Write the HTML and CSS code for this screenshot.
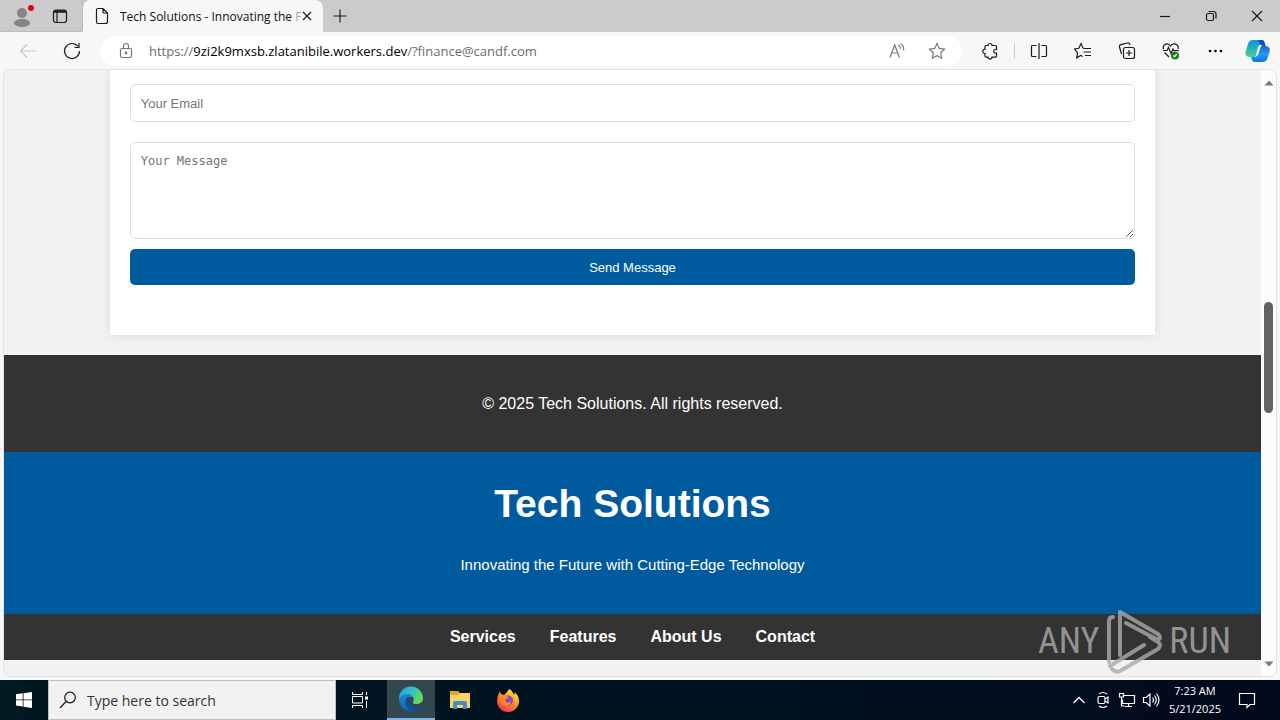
FILE: index.html
```html
<!DOCTYPE html>
<html lang="en">
<head>
<meta charset="utf-8">
<title>Tech Solutions - Innovating the Future</title>
<link rel="stylesheet" href="styles.css">
</head>
<body>
<header class="tabbar">
  <div class="tab-tools">
    <button class="icon-btn profile" aria-label="Profile">
      <svg width="26" height="28" viewBox="0 0 26 28"><circle cx="12" cy="11" r="5" fill="#858585"/><ellipse cx="12" cy="21" rx="8" ry="4" fill="#858585"/><circle cx="21" cy="6" r="3" fill="#e3000f"/></svg>
    </button>
    <button class="icon-btn" aria-label="Tab actions">
      <svg class="line" width="16" height="16" viewBox="0 0 16 16"><rect x="1.500" y="2" width="13" height="12.500" rx="2.500"/><path d="M2 3.500h12" stroke-width="2.500"/><path d="M5 4v10"/></svg>
    </button>
  </div>
  <div class="tab">
    <svg class="line" width="14" height="18" viewBox="0 0 14 18"><path d="M3 1.500h5l4.500 4.500v8.500a2 2 0 0 1-2 2h-7.500a1.500 1.500 0 0 1-1.500-1.500v-12a1.500 1.500 0 0 1 1.500-1.500zM8 1.500v3.500a1 1 0 0 0 1 1h3.500"/></svg>
    <span class="tab-title">Tech Solutions - Innovating the <span class="fade">F</span></span>
    <button class="icon-btn tab-close" aria-label="Close tab"><svg class="line" width="10" height="10" viewBox="0 0 10 10"><path d="M1 1l8 8M9 1l-8 8"/></svg></button>
  </div>
  <button class="icon-btn new-tab" aria-label="New tab"><svg class="line" width="14" height="14" viewBox="0 0 14 14"><path d="M7 0.500v13M0.500 7h13"/></svg></button>
  <div class="window-controls">
    <button class="icon-btn" aria-label="Minimize"><svg class="line" width="12" height="12" viewBox="0 0 12 12"><path d="M1 6.500h10"/></svg></button>
    <button class="icon-btn" aria-label="Restore"><svg class="line" width="12" height="12" viewBox="0 0 12 12"><rect x="1.500" y="3.500" width="7" height="7" rx="1.500"/><path d="M3.500 1.500h5a2.500 2.500 0 0 1 2.500 2.500v4.500"/></svg></button>
    <button class="icon-btn" aria-label="Close"><svg class="line" width="12" height="12" viewBox="0 0 12 12"><path d="M1 1l10 10M11 1l-10 10"/></svg></button>
  </div>
</header>

<nav class="toolbar" aria-label="Browser toolbar">
  <button class="icon-btn tool" aria-label="Back" disabled><svg class="line faint" width="18" height="16" viewBox="0 0 18 16"><path d="M8 1.500l-6.500 6.500l6.500 6.500M2 8h15"/></svg></button>
  <button class="icon-btn tool" aria-label="Refresh"><svg class="line" width="18" height="18" viewBox="0 0 18 18"><path d="M15 4.500a7.500 7.500 0 1 0 1.500 4.500M16 1v4.500h-4.500"/></svg></button>
  <div class="address">
    <svg class="line gray" width="14" height="18" viewBox="0 0 14 18"><rect x="1.500" y="6.500" width="11" height="9" rx="1.500"/><path d="M4.500 6.500v-2.500a2.500 2.500 0 0 1 5 0v2.500"/><circle cx="7" cy="11" r="0.800" fill="#666"/></svg>
    <span class="url">https://<b>9zi2k9mxsb.zlatanibile.workers.dev</b>/?finance@candf.com</span>
    <button class="icon-btn" aria-label="Read aloud"><svg class="line gray" width="18" height="18" viewBox="0 0 18 18"><path d="M2 15.500l4.700-12.500l4.700 12.500M3.500 11h6.200M10.500 3q2 1.500 2 4M12.500 1.500q4 2.500 3 7"/></svg></button>
    <button class="icon-btn" aria-label="Add to favorites"><svg class="line gray" width="18" height="18" viewBox="0 0 18 18"><path d="M9 1.500l2.300 4.900l5.200.7l-3.800 3.700l1 5.400l-4.700-2.600l-4.700 2.600l1-5.400l-3.800-3.700l5.200-.7z"/></svg></button>
  </div>
  <div class="tools">
    <button class="icon-btn tool" aria-label="Extensions"><svg class="line" width="18" height="18" viewBox="0 0 18 18"><path d="M5 3.500h2a2 2 0 0 1 4 0h3.500a1 1 0 0 1 1 1v3h-1a1.800 1.800 0 0 0 0 3.600h1v3a1 1 0 0 1-1 1h-3.500a2 2 0 0 1-4 0h-2a1 1 0 0 1-1-1v-2.500a2.200 2.200 0 0 1 0-4.500v-2.600a1 1 0 0 1 1-1z"/></svg></button>
    <span class="tool-divider"></span>
    <button class="icon-btn tool" aria-label="Split screen"><svg class="line" width="18" height="18" viewBox="0 0 18 18"><path d="M6.500 3.500h-4a1 1 0 0 0-1 1v9a1 1 0 0 0 1 1h4M11.500 3.500h4a1 1 0 0 1 1 1v9a1 1 0 0 1-1 1h-4M9 1v16"/></svg></button>
    <button class="icon-btn tool" aria-label="Favorites"><svg class="line" width="18" height="18" viewBox="0 0 18 18"><path d="M11 6.500l-1.800-.2l-2.200-4.700l-2.200 4.700l-4.500.7l3.300 3.600l-.9 5.200l4-2.300l2 1M10.500 6.500h6.500M9.500 10h7.500M11 13.500h6"/></svg></button>
    <button class="icon-btn tool" aria-label="Collections"><svg class="line" width="18" height="18" viewBox="0 0 18 18"><rect x="5.500" y="5.500" width="11" height="11" rx="2"/><path d="M11 8v6M8 11h6M3.500 12l-2-7a2 2 0 0 1 1.400-2.400l6.600-1.600a2 2 0 0 1 2.400 1.400l.2.800"/></svg></button>
    <button class="icon-btn tool" aria-label="Browser essentials"><svg class="line" width="18" height="18" viewBox="0 0 18 18"><path d="M1.500 7c-1.500-5 4.500-7 7-3c2.500-4 9-2 7.500 3M1 8.500h4l1.500-3l2.500 6l2-4.500l1 1.500h5M2.500 10.500l4.500 4.500"/><circle cx="13" cy="13.500" r="4" fill="#13801a" stroke="none"/><path d="M11.500 13.500l1 1.200l2.300-2.700" stroke="#fff"/></svg></button>
    <button class="icon-btn tool" aria-label="More"><svg width="18" height="18" viewBox="0 0 18 18"><circle cx="4" cy="9" r="1.300"/><circle cx="9.500" cy="9" r="1.300"/><circle cx="15" cy="9" r="1.300"/></svg></button>
  </div>
  <button class="icon-btn copilot" aria-label="Copilot">
    <svg width="26" height="26" viewBox="0 0 26 26">
      <defs><linearGradient id="cpa" x1="0" y1="0" x2="0" y2="1"><stop offset="0" stop-color="#0a93dc"/><stop offset=".5" stop-color="#20b4c0"/><stop offset="1" stop-color="#4bd582"/></linearGradient><linearGradient id="cpb" x1="0" y1="0" x2="0" y2="1"><stop offset="0" stop-color="#1b62c8"/><stop offset=".5" stop-color="#299bf5"/><stop offset="1" stop-color="#0878dc"/></linearGradient></defs>
      <path d="M8 2h8q2 0 2.500 2l1.500 5h-3q-2 0-3 3l-2 5q-1 2-4 2h-4q-5-1-3-6l2-7q1-4 5-4z" fill="url(#cpa)"/>
      <path d="M13 2h4q2 0 2.500 2l1.500 5h-3q-2 0-2.500-2z" fill="#1549bd"/>
      <path d="M17 8h4q5 1 3.500 6l-2 6q-1 4-5 4h-8q-2 0-2.500-2l-1-3q4 0 5-3l2-5q1-3 4-3z" fill="url(#cpb)"/>
      <path d="M14.500 7h3q-2 1-2.500 4l-1.500 4q-1 4-4.500 4q2-1 2.500-4l1-4q.5-3 2-4z" fill="#fff"/>
    </svg>
  </button>
</nav>

<div class="viewport">
  <main class="page">
    <section class="card">
      <form class="form">
        <input class="field" type="email" placeholder="Your Email" aria-label="Your Email">
        <textarea class="field message" placeholder="Your Message" aria-label="Your Message"></textarea>
        <button class="send" type="button">Send Message</button>
      </form>
    </section>
    <footer class="footer"><p>© 2025 Tech Solutions. All rights reserved.</p></footer>
    <header class="hero">
      <h1>Tech Solutions</h1>
      <p>Innovating the Future with Cutting-Edge Technology</p>
    </header>
    <nav class="site-nav"><a href="#">Services</a><a href="#">Features</a><a href="#">About Us</a><a href="#">Contact</a></nav>
  </main>
  <div class="scrollbar">
    <svg width="10" height="6" viewBox="0 0 10 6"><path d="M0.500 5.500l4.500-5l4.500 5z" fill="#7b7b7b"/></svg>
    <div class="track"><div class="thumb"></div></div>
    <svg width="10" height="6" viewBox="0 0 10 6"><path d="M0.500 0.500l4.500 5l4.500-5z" fill="#7b7b7b"/></svg>
  </div>
</div>

<div class="watermark">
  <span>ANY</span>
  <svg width="60" height="66" viewBox="0 0 60 66"><g fill="none" stroke="currentColor" stroke-width="4" stroke-linecap="round" stroke-linejoin="round"><path d="M5 54v-41q0-4 4-4"/><path d="M16 47v-43l38 22q4 4 0 6l-32-17"/><path d="M6 58l34-21M16 63l38-22q4-4 0-7l-8-5M8 61q4 4 8 2"/></g></svg>
  <span>RUN</span>
</div>

<footer class="taskbar">
  <button class="task" aria-label="Start"><svg width="16" height="16" viewBox="0 0 16 16" fill="#fff"><path d="M0 2.300l6.700-1v6.200h-6.700zM7.500 1.200l8.500-1.200v7.500h-8.500zM0 8.300h6.700v6.300l-6.700-1zM7.500 8.300h8.500v7.700l-8.500-1.200z"/></svg></button>
  <label class="search">
    <svg class="line" width="18" height="18" viewBox="0 0 18 18"><circle cx="11" cy="6.500" r="5.300"/><path d="M7 10.500l-6 6.500"/></svg>
    <input type="text" placeholder="Type here to search" aria-label="Type here to search">
  </label>
  <button class="task" aria-label="Task view"><svg width="18" height="18" viewBox="0 0 18 18" fill="none" stroke="#fff"><path d="M1.500 1v2.500h10v-2.500M1.500 17v-2.500h10v2.500M1.500 5.500h10v6.500h-10zM15.500 1v3M15.500 10v7"/><path d="M14 7h3" stroke-width="3"/></svg></button>
  <button class="task active" aria-label="Edge">
    <svg width="26" height="26" viewBox="0 0 26 26"><defs><linearGradient id="ea" x1="0" y1="0" x2="1" y2=".3"><stop offset="0" stop-color="#249fe0"/><stop offset=".6" stop-color="#32c4c3"/><stop offset="1" stop-color="#62db58"/></linearGradient><linearGradient id="eb" x1="0" y1="0" x2="0" y2="1"><stop offset="0" stop-color="#1c87d8"/><stop offset="1" stop-color="#1168bd"/></linearGradient></defs>
    <path d="M1 13a12 12 0 0 1 24-1c0 4-3 6-7 6q-4 0-3-2q2-3-1-6q-6-5-13 3z" fill="url(#ea)"/><path d="M1 13q2-5 8-5q4 0 5 3q-5 0-5 5q1 6 7 6q4 0 7-2q-4 5-10 5a12 12 0 0 1-12-12z" fill="url(#eb)"/><path d="M9 11q-5 9 4 14q6 0 10-5q-5 2-9 0q-6-3-2-9z" fill="#114f9d"/></svg>
  </button>
  <button class="task" aria-label="File Explorer"><svg width="22" height="20" viewBox="0 0 22 20"><path d="M1 1h8l2 2h10v15h-20z" fill="#e8a52c"/><path d="M1 5h8l2-2h10v15h-20z" fill="#f9d268"/><path d="M4 19v-6q0-2 2-2h10q2 0 2 2v6h-4v-4h-6v4z" fill="#3f8fc4"/></svg></button>
  <button class="task" aria-label="Firefox"><svg width="24" height="24" viewBox="0 0 24 24"><defs><linearGradient id="ff" x1=".8" y1="0" x2=".2" y2="1"><stop offset="0" stop-color="#fff04b"/><stop offset=".45" stop-color="#ff9620"/><stop offset="1" stop-color="#f5235e"/></linearGradient></defs><path d="M4 3q0 2 1 3l3 1l3-3l2-3q3 1 4 4l1 2q1-1 0-3q5 3 5 9a11 11 0 0 1-22 0q0-5 3-10z" fill="url(#ff)"/><circle cx="12" cy="12.500" r="5" fill="#8a43d6"/><path d="M4 8q4-2 7 0l2 2q-4 0-4 3q3 3 6 0q0 4-5 5q-6-1-6-10z" fill="#ff8a20"/></svg></button>
  <div class="tray">
    <button class="icon-btn" aria-label="Show hidden icons"><svg width="18" height="18" viewBox="0 0 18 18" fill="none" stroke="#fff" stroke-width="1.300"><path d="M3.500 12l5.500-5.500l5.500 5.500"/></svg></button>
    <button class="icon-btn" aria-label="Meet now"><svg width="18" height="18" viewBox="0 0 18 18" fill="none" stroke="#fff" stroke-width="1.200"><rect x="4" y="5.500" width="7" height="7" rx="1.500"/><path d="M11 8l3-2v6l-3-2M5 3q4-3 8 0M5 15q4 3 8 0"/></svg></button>
    <button class="icon-btn" aria-label="Network"><svg width="18" height="18" viewBox="0 0 18 18" fill="none" stroke="#fff" stroke-width="1.200"><path d="M6 4.500h10.500v8h-12v-4M10.500 12.500v3M7 15.500h7M1.500 2.500h4v3.500h-4zM3.500 6v9h3"/></svg></button>
    <button class="icon-btn" aria-label="Volume"><svg width="18" height="18" viewBox="0 0 18 18" fill="none" stroke="#fff" stroke-width="1.200"><path d="M1.500 6.500h2.500l4-3.500v12l-4-3.500h-2.500zM10.500 6.500q2 2.500 0 5M12.500 4.500q3.500 4.500 0 9M14.500 2.500q5 6.500 0 13"/></svg></button>
    <div class="clock"><span>7:23 AM</span><span>5/21/2025</span></div>
    <button class="icon-btn" aria-label="Notifications"><svg width="18" height="18" viewBox="0 0 18 18" fill="none" stroke="#fff" stroke-width="1.200"><path d="M1.500 2.500h15v11h-4.500l-3 3v-3h-7.500z"/></svg></button>
  </div>
</footer>
</body>
</html>
```

FILE: styles.css
```css
* { box-sizing: border-box; }

body {
  margin: 0;
  height: 100vh;
  display: flex;
  flex-direction: column;
  overflow: hidden;
  position: relative;
  background: #f7f7f7;
  font-family: "Open Sans", "Noto Sans", sans-serif;
  color: #111;
}

button { font: inherit; border: 0; padding: 0; background: none; }
svg { display: block; flex: none; }
.line { fill: none; stroke: #1b1b1b; stroke-width: 1.2; }
.gray { stroke: #777; }
.faint { stroke: #c8c8c8; }

.icon-btn {
  display: flex;
  align-items: center;
  justify-content: center;
}

/* Tab strip */
.tabbar {
  height: 32px;
  flex: none;
  display: flex;
  background: #cbcbcb;
}
.tab-tools {
  width: 83px;
  display: flex;
  align-items: center;
  padding-left: 10px;
  gap: 16px;
  border-right: 1px solid #bbb;
  border-bottom: 1px solid #bbb;
  border-bottom-right-radius: 6px;
}
.tab {
  width: 240px;
  display: flex;
  align-items: center;
  padding: 0 11px 0 12px;
  background: #f7f7f7;
  border-radius: 8px 8px 0 0;
}
.tab-title {
  flex: 1;
  margin-left: 11px;
  white-space: nowrap;
  font-size: 12px;
}
.fade { color: #aaa; }
.new-tab { width: 34px; }
.window-controls { margin-left: auto; display: flex; }
.window-controls .icon-btn { width: 46px; }

/* Toolbar */
.toolbar {
  height: 37px;
  flex: none;
  display: flex;
  align-items: center;
  padding: 0 9px 0 6px;
}
.tool { width: 44px; }
.address {
  flex: 1;
  height: 30px;
  margin-left: 6px;
  display: flex;
  align-items: center;
  padding: 0 16px 0 19px;
  gap: 22px;
  background: #fff;
  border-radius: 15px;
}
.url {
  flex: 1;
  margin-left: -6px;
  font-size: 13px;
  color: #6b6b6b;
  white-space: nowrap;
}
.url b { font-weight: 400; color: #000; }
.tools {
  margin: 0 8px 0 6px;
  display: flex;
  align-items: center;
}
.tool-divider { width: 1px; height: 16px; margin: 0 2px; background: #ccc; }
.copilot { width: 26px; }

/* Web page */
.viewport {
  flex: 1;
  min-height: 0;
  margin: 0 3px 3px;
  display: flex;
  overflow: hidden;
  border: 1px solid #e2e2e2;
  border-radius: 8px;
  background: #fcfcfc;
}
.page {
  flex: 1;
  overflow: hidden;
  background: #f2f2f2;
  font-family: "Liberation Sans", Arial, sans-serif;
  font-size: 16px;
}
.card {
  box-sizing: content-box;
  width: 80%;
  margin: 0 auto 20px;
  padding: 14px 20px 50px;
  background: #fff;
  box-shadow: 0 0 10px rgba(0, 0, 0, 0.1);
}
.form { display: flex; flex-direction: column; }
.field {
  width: 100%;
  height: 38px;
  margin: 0 0 20px;
  padding: 10px;
  border: 1px solid #ddd;
  border-radius: 5px;
  font-family: "Liberation Sans", Arial, sans-serif;
  font-size: 13px;
}
.field::placeholder { color: #757575; }
.message {
  height: 97px;
  margin-bottom: 10px;
  font-family: "DejaVu Sans Mono", monospace;
  font-size: 12px;
  line-height: 16px;
}
.send {
  height: 36px;
  border-radius: 5px;
  background: #005a9e;
  color: #fff;
  font-size: 13px;
}
.footer {
  padding: 40px 20px 39px;
  background: #333;
  color: #fff;
  text-align: center;
}
.footer p, .hero p { margin: 0; line-height: 18px; }
.hero {
  padding: 29px 20px 40px;
  background: #005a9e;
  color: #fff;
  text-align: center;
}
.hero h1 { margin: 0 0 29px; font-size: 39px; line-height: 46px; }
.hero p { font-size: 15px; }
.site-nav {
  height: 46px;
  display: flex;
  align-items: center;
  justify-content: center;
  gap: 34px;
  background: #333;
}
.site-nav a { color: #fff; font-weight: 700; text-decoration: none; }

.scrollbar {
  width: 15px;
  display: flex;
  flex-direction: column;
  align-items: center;
  padding: 10px 0 9px;
  background: #fcfcfc;
}
.track { flex: 1; padding-top: 216px; }
.thumb { width: 9px; height: 111px; border-radius: 5px; background: #636363; }

/* Overlay mark */
.watermark {
  position: absolute;
  right: 49px;
  bottom: 46px;
  display: flex;
  align-items: center;
  gap: 5px;
  color: #aaa;
  opacity: 0.8;
  font-family: "Roboto Condensed", "Liberation Sans Narrow", "Liberation Sans", sans-serif;
  font-size: 36px;
}

/* Taskbar */
.taskbar {
  height: 40px;
  flex: none;
  display: flex;
  background: linear-gradient(to right, #001820, #00121f 50%, #020a1c);
  color: #fff;
}
.task {
  width: 48px;
  display: flex;
  align-items: center;
  justify-content: center;
}
.active {
  margin: 0 1px 0 3px;
  background: #33474f;
  border-bottom: 2px solid #76b9ed;
}
.search {
  width: 288px;
  display: flex;
  align-items: center;
  gap: 10px;
  padding-left: 10px;
  background: #f2f2f2;
  border: 1px solid #c0c0c0;
}
.search input {
  flex: 1;
  min-width: 0;
  padding: 0;
  border: 0;
  background: none;
  font-family: inherit;
  font-size: 14px;
}
.search input::placeholder { color: #333; }
.tray {
  margin-left: auto;
  display: flex;
  align-items: center;
  gap: 6px;
  padding-right: 24px;
}
.clock {
  display: flex;
  flex-direction: column;
  align-items: center;
  min-width: 52px;
  margin: 0 11px 0 3px;
  font-size: 11px;
  line-height: 18px;
}
```
